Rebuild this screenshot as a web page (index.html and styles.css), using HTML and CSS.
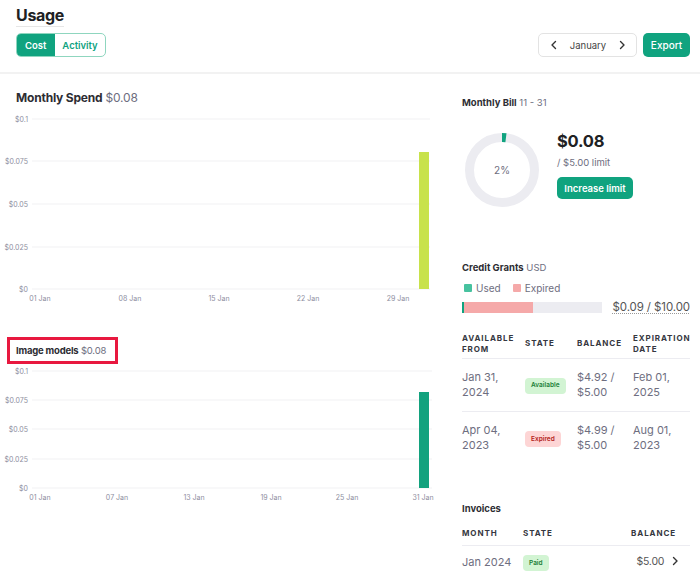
FILE: index.html
```html
<!DOCTYPE html>
<html>
<head>
<meta charset="utf-8">
<link rel="stylesheet" href="styles.css">
</head>
<body>
<div class="page">
  <header class="header">
    <div class="header-left">
      <h1 class="title">Usage</h1>
      <div class="toggle">
        <span class="seg seg-active">Cost</span>
        <span class="seg">Activity</span>
      </div>
    </div>
    <div class="header-right">
      <div class="picker">
        <svg class="chev" width="8" height="10" viewBox="0 0 8 10"><path d="M5.5 1.5 2 5l3.5 3.5" fill="none" stroke="#333" stroke-width="1.4" stroke-linecap="round" stroke-linejoin="round"/></svg>
        <span class="picker-label">January</span>
        <svg class="chev" width="8" height="10" viewBox="0 0 8 10"><path d="M2.5 1.5 6 5 2.5 8.5" fill="none" stroke="#333" stroke-width="1.4" stroke-linecap="round" stroke-linejoin="round"/></svg>
      </div>
      <button class="btn btn-export">Export</button>
    </div>
  </header>

  <main class="main">
    <section class="left">
      <h2 class="chart-title"><b>Monthly Spend</b> <span class="muted">$0.08</span></h2>
      <svg class="chart chart-1" width="440" height="200" viewBox="0 0 440 200">
        <g class="grid">
          <line x1="32" x2="430" y1="10" y2="10"/>
          <line x1="32" x2="430" y1="52" y2="52"/>
          <line x1="32" x2="430" y1="95" y2="95"/>
          <line x1="32" x2="430" y1="138" y2="138"/>
          <line x1="32" x2="430" y1="180" y2="180"/>
        </g>
        <g class="ylab">
          <text x="28" y="12.5">$0.1</text>
          <text x="28" y="54.5">$0.075</text>
          <text x="28" y="97.5">$0.05</text>
          <text x="28" y="140.5">$0.025</text>
          <text x="28" y="182.5">$0</text>
        </g>
        <rect x="419" y="43" width="10" height="137" fill="#c8e24b"/>
        <g class="xlab">
          <text x="40" y="191.5">01 Jan</text>
          <text x="130" y="191.5">08 Jan</text>
          <text x="219" y="191.5">15 Jan</text>
          <text x="308" y="191.5">22 Jan</text>
          <text x="398" y="191.5">29 Jan</text>
        </g>
      </svg>

      <div class="highlight">
        <h3 class="chart-title small"><b>Image models</b> <span class="muted">$0.08</span></h3>
      </div>
      <svg class="chart chart-2" width="440" height="145" viewBox="0 0 440 145">
        <g class="grid">
          <line x1="32" x2="432" y1="9" y2="9"/>
          <line x1="32" x2="432" y1="38" y2="38"/>
          <line x1="32" x2="432" y1="67" y2="67"/>
          <line x1="32" x2="432" y1="97" y2="97"/>
          <line x1="32" x2="432" y1="126" y2="126"/>
        </g>
        <g class="ylab">
          <text x="28" y="11.5">$0.1</text>
          <text x="28" y="40.5">$0.075</text>
          <text x="28" y="69.5">$0.05</text>
          <text x="28" y="99.5">$0.025</text>
          <text x="28" y="128.5">$0</text>
        </g>
        <rect x="419" y="30" width="10" height="96" fill="#13a27e"/>
        <g class="xlab">
          <text x="40" y="137.5">01 Jan</text>
          <text x="117" y="137.5">07 Jan</text>
          <text x="194" y="137.5">13 Jan</text>
          <text x="271" y="137.5">19 Jan</text>
          <text x="347" y="137.5">25 Jan</text>
          <text x="423" y="137.5">31 Jan</text>
        </g>
      </svg>
    </section>

    <aside class="right">
      <h3 class="sec-title"><b>Monthly Bill</b> <span class="muted">11 - 31</span></h3>
      <div class="bill">
        <div class="donut">
          <svg width="74" height="74" viewBox="0 0 74 74">
            <circle cx="37" cy="37" r="32.5" fill="none" stroke="#ececf1" stroke-width="9"/>
            <circle cx="37" cy="37" r="32.5" fill="none" stroke="#10a37f" stroke-width="9" stroke-dasharray="4 300" transform="rotate(-90 37 37)"/>
          </svg>
          <span class="donut-label">2%</span>
        </div>
        <div class="bill-info">
          <div class="bill-amount">$0.08</div>
          <div class="bill-limit">/ $5.00 limit</div>
          <button class="btn btn-limit">Increase limit</button>
        </div>
      </div>

      <h3 class="sec-title grants-title"><b>Credit Grants</b> <span class="muted">USD</span></h3>
      <div class="legend">
        <span class="key"><i class="sw sw-used"></i>Used</span>
        <span class="key"><i class="sw sw-exp"></i>Expired</span>
      </div>
      <div class="progress-row">
        <div class="progress">
          <span class="p-used"></span><span class="p-exp"></span>
        </div>
        <span class="progress-val">$0.09 / $10.00</span>
      </div>

      <table class="tbl grants">
        <thead>
          <tr><th>AVAILABLE<br>FROM</th><th>STATE</th><th>BALANCE</th><th>EXPIRATION<br>DATE</th></tr>
        </thead>
        <tbody>
          <tr><td>Jan 31,<br>2024</td><td><span class="badge b-ok">Available</span></td><td>$4.92 /<br>$5.00</td><td>Feb 01,<br>2025</td></tr>
          <tr><td>Apr 04,<br>2023</td><td><span class="badge b-exp">Expired</span></td><td>$4.99 /<br>$5.00</td><td>Aug 01,<br>2023</td></tr>
        </tbody>
      </table>

      <h3 class="sec-title inv-title"><b>Invoices</b></h3>
      <table class="tbl invoices">
        <thead>
          <tr><th>MONTH</th><th>STATE</th><th class="r">BALANCE</th></tr>
        </thead>
        <tbody>
          <tr><td>Jan 2024</td><td><span class="badge b-ok">Paid</span></td><td class="r amount">$5.00 <svg class="inv-chev" width="8" height="10" viewBox="0 0 8 10"><path d="M2.5 1.5 6 5 2.5 8.5" fill="none" stroke="#333" stroke-width="1.4" stroke-linecap="round" stroke-linejoin="round"/></svg></td></tr>
        </tbody>
      </table>
    </aside>
  </main>
</div>
</body>
</html>
```

FILE: styles.css
```css
* { box-sizing: border-box; }
html, body { margin: 0; padding: 0; background: #fff; }
body {
  font-family: Inter, "Noto Sans", "Liberation Sans", sans-serif;
  color: #202123;
  width: 700px;
  height: 586px;
  overflow: hidden;
}
.header {
  display: flex;
  justify-content: space-between;
  align-items: flex-end;
  padding: 6px 10px 15px 16px;
  border-bottom: 2px solid #f2f2f2;
}
.header-left { display: flex; flex-direction: column; align-items: flex-start; }
.title {
  margin: 0;
  font-size: 16px;
  line-height: 19px;
  font-weight: 700;
  letter-spacing: -0.3px;
  padding-bottom: 1px;
  border-bottom: 1px solid #e6e6e6;
}
.toggle {
  margin-top: 6px;
  display: flex;
  height: 24px;
  border: 1px solid #8fd6bf;
  border-radius: 5px;
  overflow: hidden;
}
.seg {
  display: flex;
  align-items: center;
  padding: 0 7px;
  font-size: 9.5px;
  font-weight: 600;
  color: #10a37f;
}
.seg-active { background: #10a37f; color: #fff; padding: 0 9px 0 8px; }
.header-right { display: flex; gap: 6px; }
.picker {
  display: flex;
  align-items: center;
  width: 99px;
  height: 24px;
  border: 1px solid #e3e3e3;
  border-radius: 5px;
  padding: 0 10px 0 11px;
  justify-content: space-between;
}
.picker-label { font-size: 9.5px; color: #444; }
.btn {
  font-family: inherit;
  border: none;
  border-radius: 5px;
  background: #10a37f;
  color: #fff;
  font-weight: 500;
  cursor: pointer;
}
.btn-export { height: 24px; width: 47px; padding: 0; font-size: 10px; }

.main { display: flex; }
.left { width: 440px; flex: none; padding-top: 15px; }
.chart-title {
  margin: 0 0 0 16px;
  font-size: 12px;
  line-height: 18px;
  font-weight: 400;
  letter-spacing: -0.2px;
}
.chart-title b { font-weight: 700; color: #2d2d33; }
.muted { color: #6e6e80; }
.chart { display: block; }
.chart-1 { margin-top: 2px; }
.grid line { stroke: #f1f1f3; stroke-width: 1; }
.ylab text { font-size: 7px; fill: #8e8ea0; text-anchor: end; font-family: Inter, sans-serif; }
.xlab text { font-size: 7px; fill: #8e8ea0; text-anchor: middle; font-family: Inter, sans-serif; }
.highlight {
  margin: 28px 0 0 7px;
  width: 111px;
  height: 27px;
  border: 3px solid #e8183f;
  display: flex;
  align-items: center;
  padding-left: 6px;
}
.chart-title.small { margin: 0; font-size: 9.5px; line-height: 12px; }
.chart-2 { margin-top: -2px; }

.right { width: 228px; margin-left: 22px; padding-top: 22px; }
.sec-title {
  margin: 0;
  font-size: 9.5px;
  line-height: 14px;
  font-weight: 400;
}
.sec-title b { font-weight: 700; color: #2d2d33; }
.bill { display: flex; align-items: flex-start; margin-top: 23px; }
.donut { position: relative; width: 74px; height: 74px; margin-left: 3px; flex: none; }
.donut svg { display: block; }
.donut-label {
  position: absolute; inset: 0;
  display: flex; align-items: center; justify-content: center;
  font-size: 10px; color: #6e6e80;
}
.bill-info { margin-left: 18px; display: flex; flex-direction: column; align-items: flex-start; }
.bill-amount { font-size: 16.5px; line-height: 22px; font-weight: 700; margin-top: -3px; letter-spacing: -0.2px; }
.bill-limit { font-size: 9.5px; color: #6e6e80; margin-top: 4px; line-height: 14px; }
.btn-limit { margin-top: 7px; height: 22px; width: 76px; padding: 0; font-size: 9.5px; font-weight: 600; }

.grants-title { margin-top: 54px; }
.legend { display: flex; gap: 10px; margin-top: 6px; font-size: 10px; color: #6e6e80; line-height: 14px; }
.key { display: flex; align-items: center; }
.sw { display: inline-block; width: 8px; height: 8px; border-radius: 1px; margin: 0 4px 0 2px; }
.sw-used { background: #47c29f; }
.sw-exp { background: #f5a9a9; }
.progress-row { display: flex; align-items: center; justify-content: space-between; margin-top: 5px; }
.progress { display: flex; width: 140px; height: 11px; background: #ececf1; }
.p-used { width: 2px; background: #10a37f; }
.p-exp { width: 69px; background: #f5a9a9; }
.progress-val {
  font-size: 11.5px;
  color: #555;
  text-decoration: underline dotted #999;
  text-underline-offset: 2px;
  letter-spacing: -0.1px;
}

.tbl { width: 228px; border-collapse: collapse; table-layout: fixed; }
.tbl th {
  text-align: left;
  font-size: 8px;
  line-height: 11px;
  font-weight: 700;
  letter-spacing: 0.9px;
  color: #353740;
  padding: 0;
  vertical-align: middle;
}
.tbl td {
  font-size: 11px;
  line-height: 14.5px;
  color: #6e6e80;
  padding: 0;
  vertical-align: middle;
}
.grants { margin-top: 18px; }
.grants th { height: 26px; border-bottom: 1px solid #ececf1; padding-bottom: 2px; }
.grants th:nth-child(1) { width: 63px; }
.grants th:nth-child(2) { width: 52px; }
.grants th:nth-child(3) { width: 56px; }
.grants tbody td { height: 53px; }
.grants tbody tr:first-child td { border-bottom: 1px solid #ececf1; }
.badge {
  display: inline-flex;
  align-items: center;
  height: 16px;
  padding: 0 6px;
  border-radius: 4px;
  font-size: 6.5px;
  font-weight: 600;
}
.b-ok { background: #d2f4d3; color: #1a7f37; }
.b-exp { background: #fdd5d5; color: #b42318; }
.grants td:nth-child(2) { padding-top: 1px; }

.inv-title { margin-top: 38px; }
.invoices { margin-top: 7px; }
.invoices th { height: 22px; border-bottom: 1px solid #ececf1; }
.invoices th:nth-child(1) { width: 61px; }
.invoices th:nth-child(3) { padding-right: 14px; }
.invoices td { height: 34px; }
.r { text-align: right !important; }
.invoices td.amount { color: #555; padding-right: 11px; font-size: 10.5px; letter-spacing: -0.2px; }
.inv-chev { margin-left: 4px; vertical-align: -1px; }
```
